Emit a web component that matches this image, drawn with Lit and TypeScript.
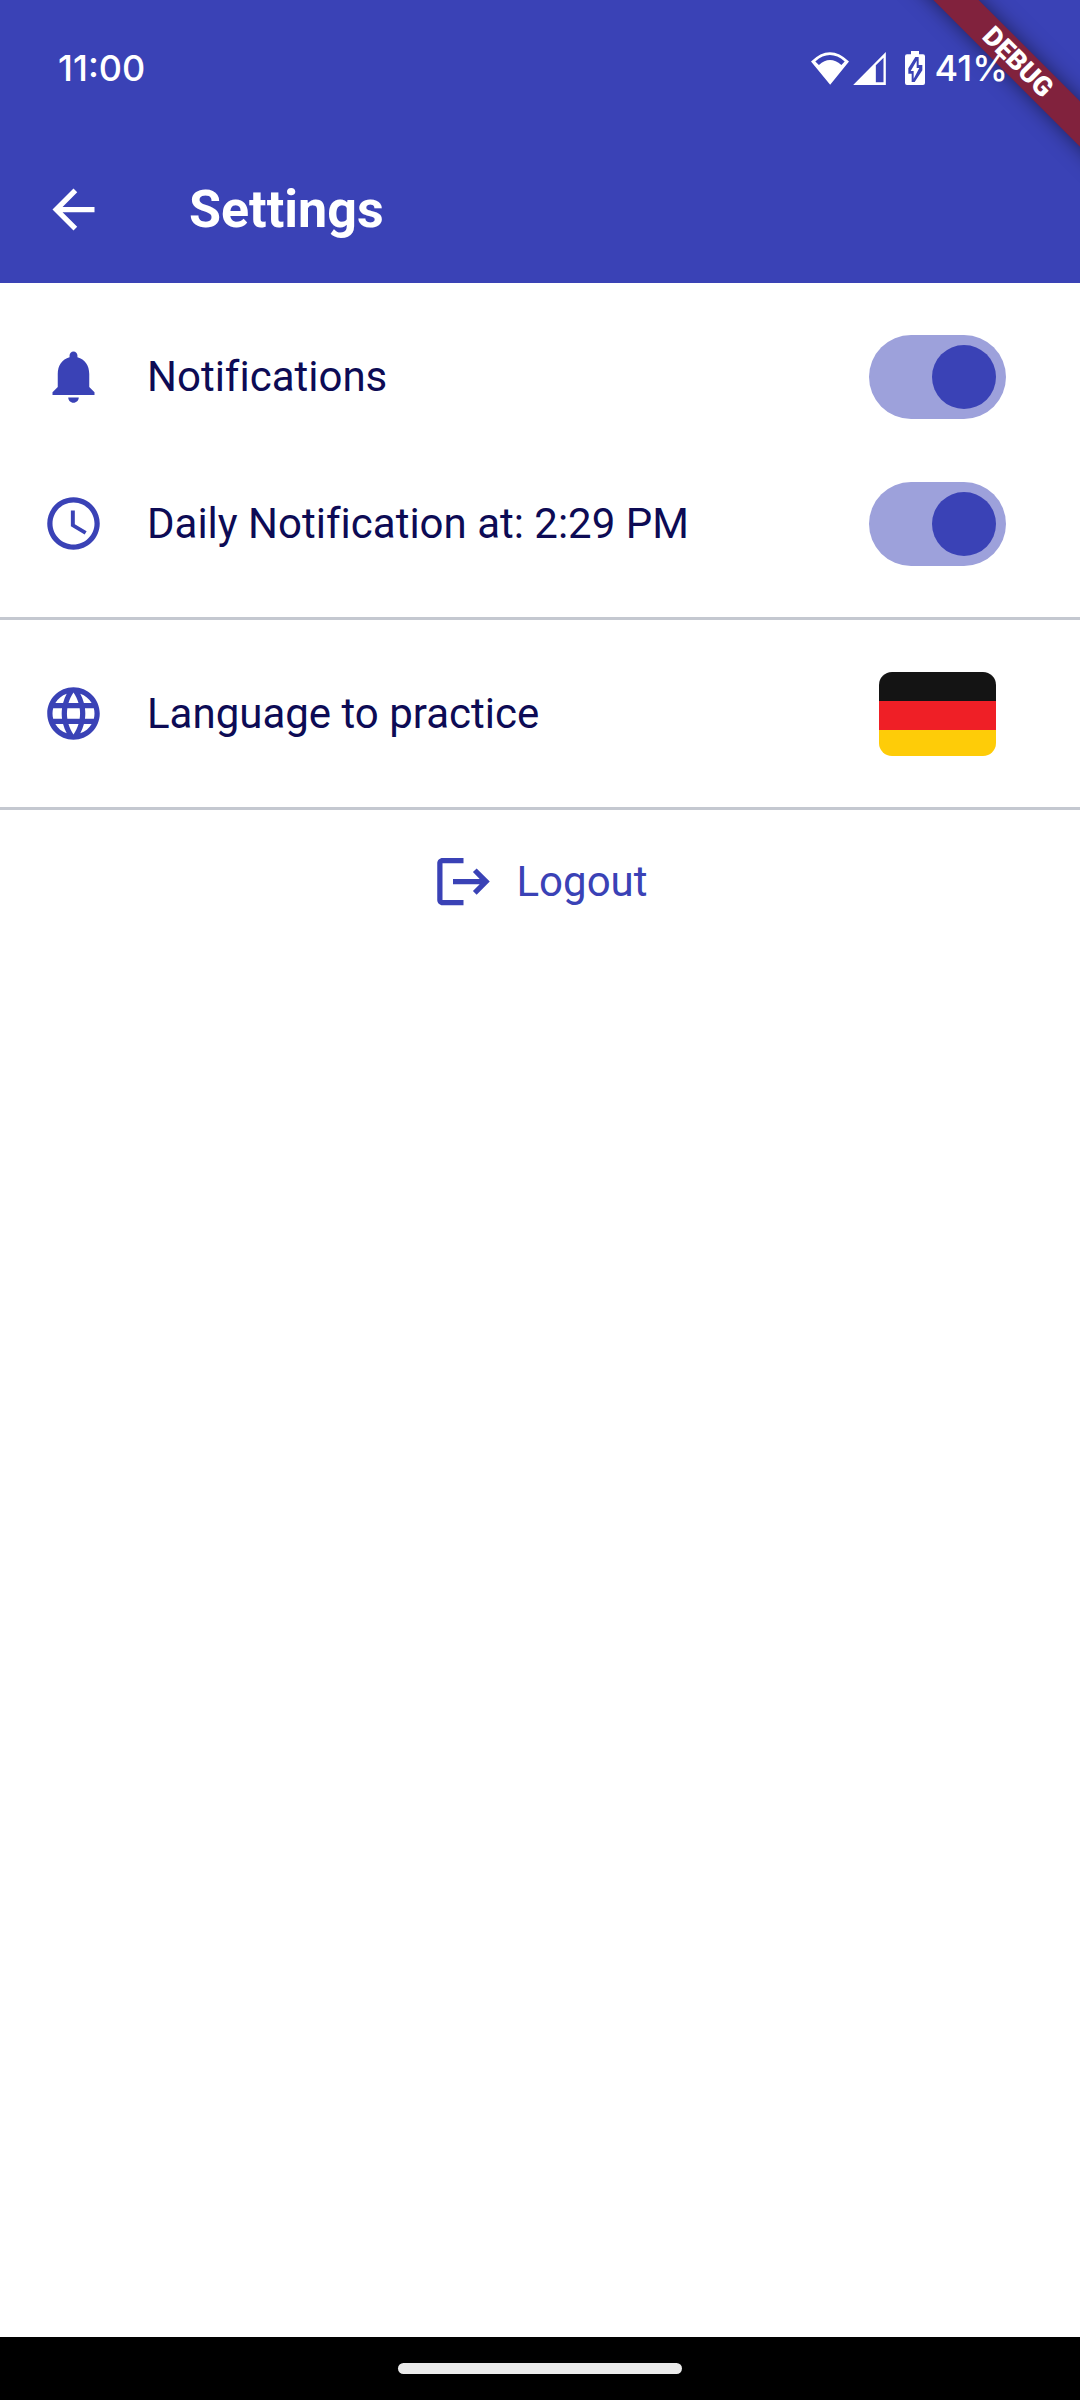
import { LitElement, html, css, svg } from "lit";
import { customElement, property, state } from "lit/decorators.js";

const ICONS = {
  back: svg`<path d="M20 11H7.83l5.59-5.59L12 4l-8 8 8 8 1.41-1.41L7.83 13H20v-2z"/>`,
  bell: svg`<path d="M12 22c1.1 0 2-.9 2-2h-4c0 1.1.89 2 2 2zm6-6v-5c0-3.07-1.64-5.64-4.5-6.32V4c0-.83-.67-1.5-1.5-1.5s-1.5.67-1.5 1.5v.68C7.63 5.36 6 7.92 6 11v5l-2 2v1h16v-1l-2-2z"/>`,
  clock: svg`<path d="M11.99 2C6.47 2 2 6.48 2 12s4.47 10 9.99 10C17.52 22 22 17.52 22 12S17.52 2 11.99 2zM12 20c-4.42 0-8-3.58-8-8s3.58-8 8-8 8 3.58 8 8-3.58 8-8 8z"/><path d="M12.5 7H11v6l5.25 3.15.75-1.23-4.5-2.67z"/>`,
  globe: svg`<path d="M11.99 2C6.47 2 2 6.48 2 12s4.47 10 9.99 10C17.52 22 22 17.52 22 12S17.52 2 11.99 2zm6.93 6h-2.95c-.32-1.25-.78-2.45-1.38-3.56 1.84.63 3.37 1.91 4.33 3.56zM12 4.04c.83 1.2 1.48 2.53 1.91 3.96h-3.82c.43-1.43 1.08-2.76 1.91-3.96zM4.26 14C4.1 13.36 4 12.69 4 12s.1-1.36.26-2h3.38c-.08.66-.14 1.32-.14 2s.06 1.34.14 2H4.26zm.82 2h2.95c.32 1.25.78 2.45 1.38 3.56-1.84-.63-3.37-1.9-4.33-3.56zm2.95-8H5.08c.96-1.66 2.49-2.93 4.33-3.56C8.81 5.55 8.35 6.75 8.03 8zM12 19.96c-.83-1.2-1.48-2.53-1.91-3.96h3.82c-.43 1.43-1.08 2.76-1.91 3.96zM14.34 14H9.66c-.09-.66-.16-1.32-.16-2s.07-1.35.16-2h4.68c.09.65.16 1.32.16 2s-.07 1.34-.16 2zm.25 5.56c.6-1.11 1.06-2.31 1.38-3.56h2.95c-.96 1.65-2.49 2.93-4.33 3.56zM16.36 14c.08-.66.14-1.32.14-2s-.06-1.34-.14-2h3.38c.16.64.26 1.31.26 2s-.1 1.36-.26 2h-3.38z"/>`,
  logout: svg`<path d="M17 7l-1.41 1.41L18.17 11H8v2h10.17l-2.58 2.58L17 17l5-5zM4 5h8V3H4c-1.1 0-2 .9-2 2v14c0 1.1.9 2 2 2h8v-2H4V5z"/>`,
};

type IconName = keyof typeof ICONS;

@customElement("app-icon")
export class AppIcon extends LitElement {
  @property() name: IconName = "bell";

  static styles = css`
    :host {
      display: block;
      flex: none;
      width: 63px;
      height: 63px;
    }
    .glyph {
      display: block;
      width: 100%;
      height: 100%;
      fill: currentColor;
    }
  `;

  render() {
    return html`<svg class="glyph" viewBox="0 0 24 24" aria-hidden="true">${ICONS[this.name]}</svg>`;
  }
}

@customElement("status-bar")
export class StatusBar extends LitElement {
  static styles = css`
    :host {
      display: flex;
      align-items: center;
      justify-content: space-between;
      height: 136px;
      padding: 0 72px 0 58px;
      box-sizing: border-box;
      font: 500 36px/44px Inter, Roboto, sans-serif;
      color: #fff;
    }
    .indicators {
      display: flex;
      align-items: center;
    }
    .indicator {
      display: block;
      fill: #fff;
      fill-rule: evenodd;
    }
    .wifi {
      width: 38px;
      height: 33px;
      margin-right: 4px;
    }
    .signal {
      width: 33px;
      height: 33px;
      margin-right: 19px;
    }
    .battery {
      width: 20px;
      height: 34px;
      margin-right: 10px;
    }
  `;

  render() {
    return html`
      <span>11:00</span>
      <div class="indicators">
        <svg class="indicator wifi" viewBox="0 0 115 99" role="img" aria-label="Wi-Fi">
          <path d="M0 28Q57-28 115 28L58 99ZM13 28Q57-10 102 28L92 39Q57 9 24 39Z" />
        </svg>
        <svg class="indicator signal" viewBox="0 0 98 99" role="img" aria-label="Mobile signal">
          <path d="M0 99L98 0V99ZM68 40L91 17V91H68Z" />
        </svg>
        <svg class="indicator battery" viewBox="0 0 60 102" role="img" aria-label="Battery charging">
          <path d="M18 0H42V10H54Q60 10 60 16V96Q60 102 54 102H6Q0 102 0 96V16Q0 10 6 10H18ZM31 18H41V42H52V58L29 93H20V68H10V52Z" />
          <path d="M35 29V51H43L26 83V60H17Z" />
        </svg>
        <span>41%</span>
      </div>
    `;
  }
}

@customElement("app-root")
export class AppRoot extends LitElement {
  @state() private notifications = true;
  @state() private daily = true;

  static styles = css`
    :host {
      display: flex;
      flex-direction: column;
      min-height: 100vh;
      background: #fff;
      color: #0d0b55;
      font: 400 42px/49px Roboto, sans-serif;
      font-variant-ligatures: none;
    }
    .header {
      position: relative;
      isolation: isolate;
      background: #3a42b6;
      color: #fff;
    }
    .ribbon-corner {
      position: absolute;
      z-index: -1;
      top: 0;
      right: 0;
      width: 200px;
      height: 200px;
      overflow: hidden;
    }
    .ribbon {
      position: absolute;
      top: 46px;
      right: -88px;
      width: 300px;
      height: 32px;
      transform: rotate(45deg);
      background: #81223d;
      box-shadow: 0 0 20px rgba(0, 0, 0, 0.5);
      font: 900 27px/32px Roboto, sans-serif;
      text-align: center;
    }
    .app-bar {
      display: flex;
      align-items: center;
      gap: 84px;
      height: 147px;
      padding: 0 42px;
    }
    .title {
      margin: 0;
      font: 700 52px/64px Roboto, sans-serif;
    }
    .plain {
      padding: 0;
      border: 0;
      background: none;
      color: inherit;
      font: inherit;
      text-align: left;
      cursor: pointer;
    }
    .section {
      padding: 20px 0;
      border-bottom: 3px solid #c4c8d0;
    }
    .row {
      display: flex;
      align-items: center;
      gap: 42px;
      width: 100%;
      height: 147px;
      box-sizing: border-box;
      padding: 0 74px 0 42px;
      cursor: pointer;
    }
    .language {
      padding-right: 84px;
    }
    .label {
      flex: 1;
    }
    .accent {
      color: #3a42b6;
    }
    .switch {
      appearance: none;
      display: flex;
      align-items: center;
      flex: none;
      width: 137px;
      height: 84px;
      margin: 0;
      padding: 0 10px;
      box-sizing: border-box;
      border-radius: 42px;
      background: #c4c8d0;
      cursor: pointer;
    }
    .switch::before {
      content: "";
      width: 64px;
      height: 64px;
      border-radius: 50%;
      background: #fff;
    }
    .switch:checked {
      justify-content: flex-end;
      background: #9da1db;
    }
    .switch:checked::before {
      background: #3a42b6;
    }
    .flag {
      display: block;
      flex: none;
      width: 117px;
      height: 84px;
      border-radius: 13px;
    }
    .logout {
      display: flex;
      align-items: center;
      align-self: center;
      gap: 21px;
      margin-top: 40px;
    }
    .nav {
      display: flex;
      align-items: center;
      justify-content: center;
      height: 63px;
      margin-top: auto;
      background: #000;
    }
    .handle {
      width: 284px;
      height: 11px;
      border-radius: 6px;
      background: #ebebeb;
    }
  `;

  render() {
    return html`
      <header class="header">
        <div class="ribbon-corner"><div class="ribbon">DEBUG</div></div>
        <status-bar></status-bar>
        <div class="app-bar">
          <button class="plain" aria-label="Back"><app-icon name="back"></app-icon></button>
          <h1 class="title">Settings</h1>
        </div>
      </header>

      <section class="section">
        <label class="row">
          <app-icon class="accent" name="bell"></app-icon>
          <span class="label">Notifications</span>
          <input
            class="switch"
            type="checkbox"
            role="switch"
            .checked=${this.notifications}
            @change=${(e: Event) => (this.notifications = (e.target as HTMLInputElement).checked)}
          />
        </label>
        <label class="row">
          <app-icon class="accent" name="clock"></app-icon>
          <span class="label">Daily Notification at: 2:29 PM</span>
          <input
            class="switch"
            type="checkbox"
            role="switch"
            .checked=${this.daily}
            @change=${(e: Event) => (this.daily = (e.target as HTMLInputElement).checked)}
          />
        </label>
      </section>

      <section class="section">
        <button class="plain row language">
          <app-icon class="accent" name="globe"></app-icon>
          <span class="label">Language to practice</span>
          <svg class="flag" viewBox="0 0 117 84" role="img" aria-label="German">
            <path fill="#141414" d="M0 0H117V29H0Z" />
            <path fill="#ef1f26" d="M0 29H117V58H0Z" />
            <path fill="#fecc08" d="M0 58H117V84H0Z" />
          </svg>
        </button>
      </section>

      <button class="plain logout accent">
        <app-icon name="logout"></app-icon>
        <span>Logout</span>
      </button>

      <footer class="nav"><div class="handle"></div></footer>
    `;
  }
}
